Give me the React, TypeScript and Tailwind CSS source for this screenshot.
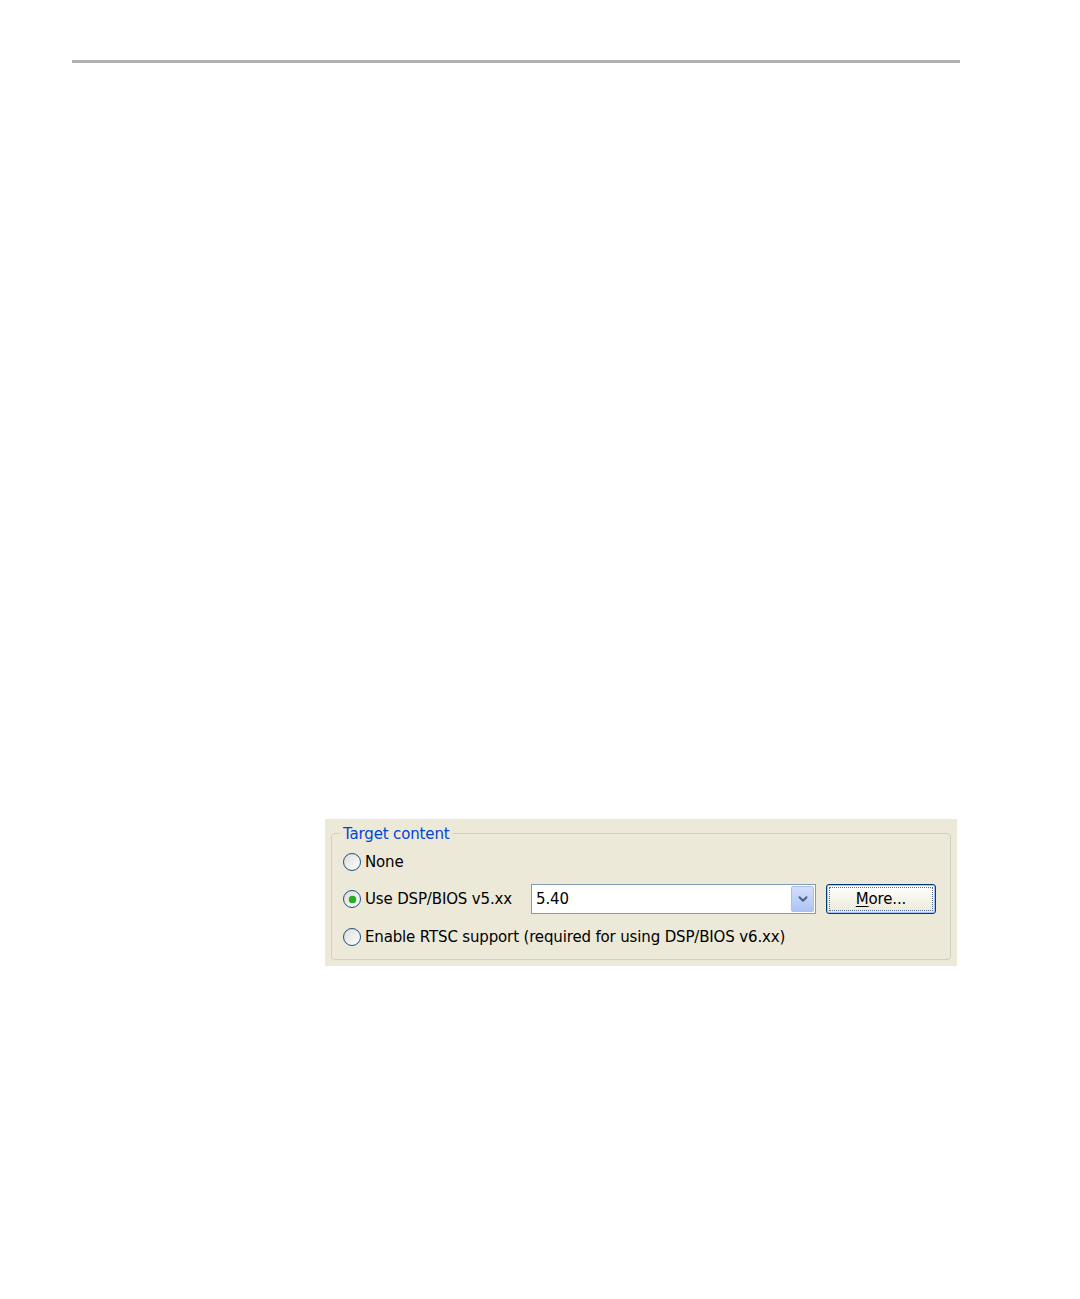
import { ChevronDown } from 'lucide-react';

function Radio({ checked }: { checked?: boolean }) {
  return (
    <span className="flex h-[18px] w-[18px] shrink-0 items-center justify-center rounded-full border border-[#1c5180] bg-gradient-to-br from-[#dcdcd6] to-[#ffffff]">
      {checked && <span className="h-[7px] w-[7px] rounded-full bg-[#22b022] shadow-[0_0_1px_#0a7a0a]" />}
    </span>
  );
}

export default function App() {
  const font = { fontFamily: '"DejaVu Sans", Tahoma, sans-serif' };

  return (
    <div className="h-[1299px] w-[1080px] bg-white" style={font}>
      <div className="pt-[60px] pl-[72px]">
        <div className="h-[3px] w-[888px] bg-[#b0b0b0]" />
      </div>

      <div className="ml-[325px] mt-[756px] h-[147px] w-[632px] bg-[#ece9d8] px-[6px] pt-[4px]">
        <fieldset className="h-[137px] rounded-[4px] border border-[#d0d0bf] pl-[11px] pr-[14px]">
          <legend className="-ml-[3px] px-[3px] pt-[3px] text-[15px] leading-[17px] tracking-[-0.15px] text-[#0046d5]">
            Target content
          </legend>

          <div className="mt-[9px] flex flex-col text-[15px] leading-[17px] tracking-[-0.15px] text-black">
            <label className="flex h-[20px] items-center gap-[4px]">
              <Radio />
              <span>None</span>
            </label>

            <div className="mt-[12px] flex h-[30px] items-center">
              <label className="flex w-[188px] items-center gap-[4px]">
                <Radio checked />
                <span>Use DSP/BIOS v5.xx</span>
              </label>
              <div className="flex h-[30px] w-[285px] items-center border border-[#7f9db9] bg-white pl-[4px] pr-[1px]">
                <span className="flex-1">5.40</span>
                <span className="flex h-[26px] w-[23px] items-center justify-center rounded-[2px] border border-[#a9bff0] bg-gradient-to-b from-[#d4e0fc] to-[#adc3f4]">
                  <ChevronDown className="h-[14px] w-[14px] text-[#4d6185]" strokeWidth={3.5} />
                </span>
              </div>
              <button className="ml-[10px] h-[30px] w-[110px] rounded-[3px] border border-[#003c74] bg-gradient-to-b from-[#ffffff] to-[#ece9d8] p-[2px] shadow-[inset_0_0_0_1px_#a8c4f0]">
                <span className="flex h-full w-full items-center justify-center border border-dotted border-[#5a6e96]">
                  <span className="underline underline-offset-2">M</span>ore...
                </span>
              </button>
            </div>

            <label className="mt-[13px] flex h-[20px] items-center gap-[4px]">
              <Radio />
              <span>Enable RTSC support (required for using DSP/BIOS v6.xx)</span>
            </label>
          </div>
        </fieldset>
      </div>
    </div>
  );
}
